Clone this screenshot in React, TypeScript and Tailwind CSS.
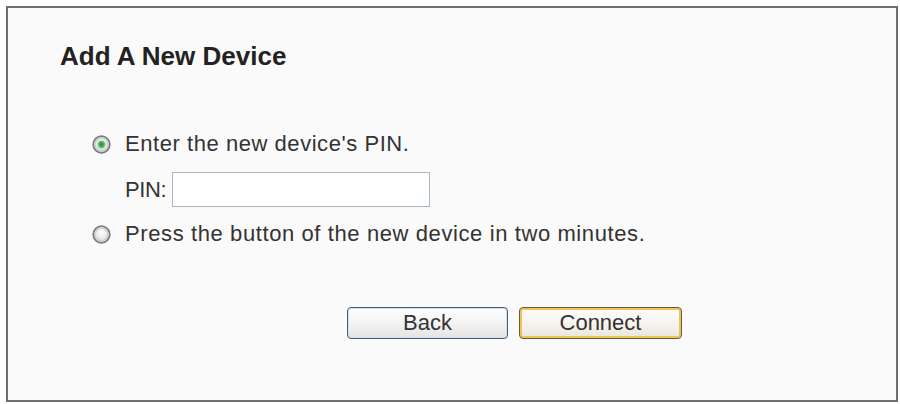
import { useState } from "react";

// small windows-style radio drawn in svg
function Radio({ checked }: { checked: boolean }) {
  return (
    <svg width="19" height="19" viewBox="0 0 19 19" className="shrink-0">
      <defs>
        <radialGradient id={checked ? "rg-on" : "rg-off"} cx="50%" cy="40%" r="60%">
          <stop offset="0%" stopColor="#ffffff" />
          <stop offset="100%" stopColor="#d6d6d6" />
        </radialGradient>
        <radialGradient id="dot" cx="50%" cy="50%" r="50%">
          <stop offset="0%" stopColor="#2a8a3a" />
          <stop offset="60%" stopColor="#4cb058" />
          <stop offset="100%" stopColor="#a8dcae" />
        </radialGradient>
      </defs>
      <circle cx="9.5" cy="9.5" r="8.3" fill={checked ? "url(#rg-on)" : "url(#rg-off)"} stroke="#7c7c7c" strokeWidth="1.7" />
      <circle cx="9.5" cy="9.5" r="6.4" fill="none" stroke="#c4ccd6" strokeWidth="1.2" />
      {checked && <circle cx="9.5" cy="9.5" r="4.2" fill="url(#dot)" />}
    </svg>
  );
}

export default function App() {
  const [mode, setMode] = useState<"pin" | "button">("pin");
  const [pin, setPin] = useState("");

  return (
    <div className="w-[900px] h-[404px] bg-white pt-[6px] pl-[6px] font-['Liberation_Sans',Arial,sans-serif] text-[#333]">
      <div className="w-[892px] h-[396px] border-2 border-[#6e6e6e] bg-[#fafafa] pt-[33px] pl-[52px]">
        <h1 className="text-[26px] leading-[30px] font-bold text-[#222]">Add A New Device</h1>

        <div className="mt-[60px] pl-[32px] flex flex-col">
          <label className="flex items-center gap-[14px] h-[26px] cursor-pointer" onClick={() => setMode("pin")}>
            <Radio checked={mode === "pin"} />
            <span className="text-[22px] leading-[26px] tracking-[0.55px]">Enter the new device's PIN.</span>
          </label>

          <div className="flex items-center gap-[6px] mt-[15px] pl-[33px]">
            <span className="text-[22px] leading-[26px] tracking-[-0.4px]">PIN:</span>
            <input
              value={pin}
              onChange={(e) => setPin(e.target.value)}
              className="w-[258px] h-[35px] border border-[#a8b6c6] bg-white outline-none px-1 text-[20px]"
            />
          </div>

          <label className="flex items-center gap-[14px] h-[26px] mt-[14px] cursor-pointer" onClick={() => setMode("button")}>
            <Radio checked={mode === "button"} />
            <span className="text-[22px] leading-[26px] tracking-[0.6px]">Press the button of the new device in two minutes.</span>
          </label>
        </div>

        <div className="flex gap-[11px] mt-[60px] pl-[287px]">
          <button className="w-[161px] h-[32px] rounded-[4px] border border-[#4d5d6e] bg-gradient-to-b from-[#fefefe] via-[#f3f3f3] to-[#e4e4e4] shadow-[inset_0_0_0_1px_#cfe0f0] text-[22px] leading-[26px] text-[#333]">
            Back
          </button>
          <button className="w-[163px] h-[32px] rounded-[4px] border border-[#5d5a4e] bg-gradient-to-b from-[#fefefe] via-[#f6f4ee] to-[#e8e6de] shadow-[inset_0_0_0_2px_#f2c44e] text-[22px] leading-[26px] text-[#333]">
            Connect
          </button>
        </div>
      </div>
    </div>
  );
}
